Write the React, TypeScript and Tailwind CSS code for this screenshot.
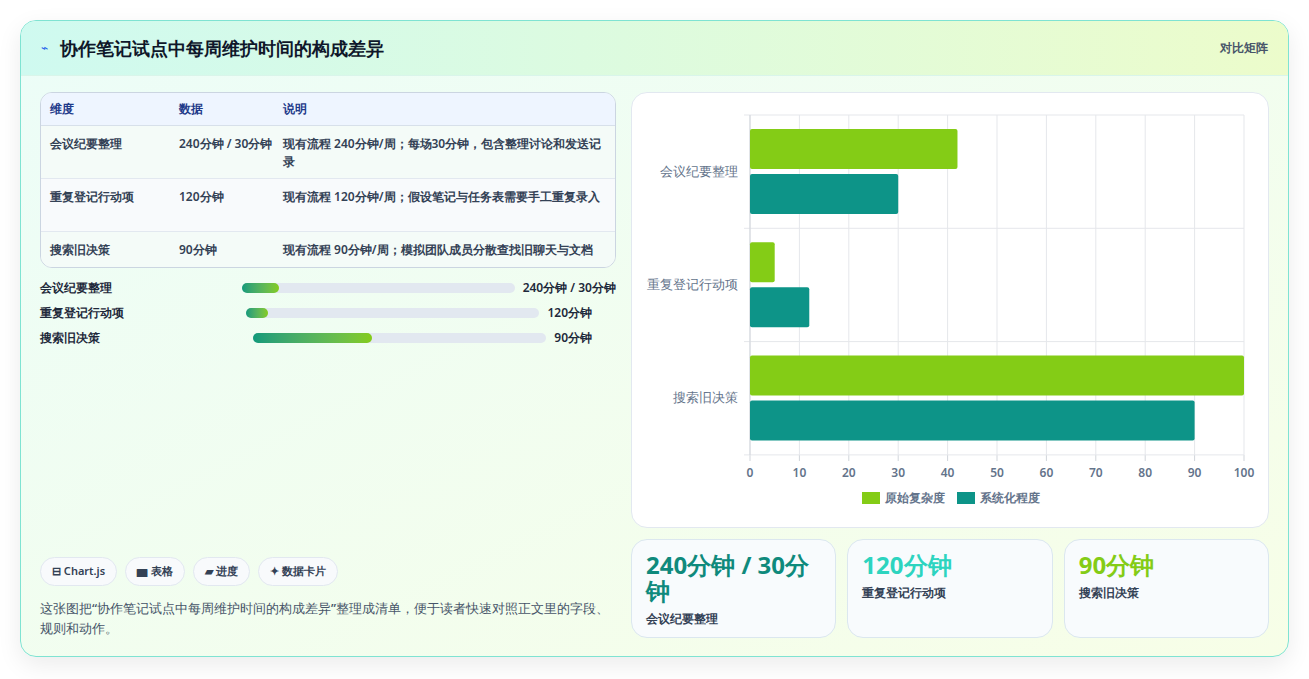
const rows = [
  { k: "会议纪要整理", v: "240分钟 / 30分钟", vt: "240分钟 / 30分钟", d: "现有流程 240分钟/周；每场30分钟，包含整理讨论和发送记录", track: 273, fill: 37 },
  { k: "重复登记行动项", v: "120分钟", vt: "120分钟", d: "现有流程 120分钟/周；假设笔记与任务表需要手工重复录入", track: 293, fill: 22 },
  { k: "搜索旧决策", v: "90分钟", vt: "90分钟", d: "现有流程 90分钟/周；模拟团队成员分散查找旧聊天与文档", track: 293, fill: 119 },
];

const chart = [
  { k: "会议纪要整理", a: 42, b: 30 },
  { k: "重复登记行动项", a: 5, b: 12 },
  { k: "搜索旧决策", a: 100, b: 90 },
];

function Chart() {
  const x0 = 118, w = 494, y0 = 22, bh = 113.3;
  const sx = (v: number) => x0 + (v / 100) * w;
  return (
    <svg width="637" height="435" className="block">
      {[0, 10, 20, 30, 40, 50, 60, 70, 80, 90, 100].map((t) => (
        <g key={t}>
          <line x1={sx(t)} x2={sx(t)} y1={y0} y2={y0 + 340} stroke="#e5e7eb" />
          <line x1={sx(t)} x2={sx(t)} y1={y0 + 340} y2={y0 + 346} stroke="#d1d5db" />
          <text x={sx(t)} y={y0 + 362} textAnchor="middle" fontSize="12" fill="#64748b" fontWeight="600">{t}</text>
        </g>
      ))}
      {[0, 1, 2, 3].map((i) => (
        <line key={i} x1={x0 - 6} x2={x0 + w} y1={y0 + i * bh} y2={y0 + i * bh} stroke="#e5e7eb" />
      ))}
      <line x1={x0} x2={x0} y1={y0} y2={y0 + 340} stroke="#d1d5db" />
      {chart.map((c, i) => {
        const top = y0 + i * bh;
        return (
          <g key={c.k}>
            <text x={x0 - 12} y={top + bh / 2 + 4} textAnchor="end" fontSize="13" fill="#64748b">{c.k}</text>
            <rect x={x0} y={top + 14} width={sx(c.a) - x0} height={40} rx="2" fill="#84cc16" />
            <rect x={x0} y={top + 59} width={sx(c.b) - x0} height={40} rx="2" fill="#0d9488" />
          </g>
        );
      })}
      <rect x="230" y="399" width="18" height="12" fill="#84cc16" />
      <text x="253" y="409" fontSize="12" fill="#64748b" fontWeight="600">原始复杂度</text>
      <rect x="325" y="399" width="18" height="12" fill="#0d9488" />
      <text x="348" y="409" fontSize="12" fill="#64748b" fontWeight="600">系统化程度</text>
    </svg>
  );
}

export default function App() {
  return (
    <div className="w-[1309px] h-[679px] bg-white p-5 pb-0 font-['Noto_Sans_CJK_SC','Noto_Sans',sans-serif]">
      <div className="h-[637px] rounded-2xl border border-[#7fe3d2] overflow-hidden bg-gradient-to-br from-[#ecfdf8] to-[#f7fee7] shadow-[0_8px_24px_rgba(0,0,0,0.08)] flex flex-col">
        <div className="h-[56px] flex items-center justify-between px-5 bg-gradient-to-r from-[#cffaf0] to-[#ecfccb] border-b border-[#d9f5ea]">
          <div className="flex items-center gap-3">
            <span className="text-[#2563eb] text-xs">⌁</span>
            <h1 className="text-[18px] font-bold text-[#0f172a]">协作笔记试点中每周维护时间的构成差异</h1>
          </div>
          <span className="text-[12px] text-[#475569] font-semibold">对比矩阵</span>
        </div>
        <div className="flex-1 flex gap-[15px] px-[19px] pt-4 pb-[18px]">
          <div className="w-[578px] flex flex-col">
            <div className="rounded-xl border border-[#cbd5e1] overflow-hidden bg-[#f8fafc] text-[12px] font-semibold text-[#334155]">
              <div className="flex h-[33px] items-center bg-[#eef5ff] text-[#1e3a8a] border-b border-[#d7e0ea]">
                <div className="w-[138px] pl-[9px]">维度</div>
                <div className="w-[104px]">数据</div>
                <div className="flex-1">说明</div>
              </div>
              {rows.map((r, i) => (
                <div key={r.k} className={`flex pt-[9px] leading-[18px] ${i < 2 ? "h-[53px] border-b border-[#e2e8f0]" : "h-[35px]"} ${i === 1 ? "bg-[#f8fafc]" : "bg-[#f4fbf8]"}`}>
                  <div className="w-[138px] pl-[9px]">{r.k}</div>
                  <div className="w-[104px] pr-2">{r.v}</div>
                  <div className="flex-1 pr-3">{r.d}</div>
                </div>
              ))}
            </div>
            <div className="mt-[12px] flex flex-col gap-[9px] text-[12px] font-semibold text-[#1e293b]">
              {rows.map((r) => (
                <div key={r.k} className="flex items-center h-4">
                  <span className="flex-1">{r.k}</span>
                  <div className="h-[10px] rounded-full bg-[#e2e8f0]" style={{ width: r.track }}>
                    <div className="h-full rounded-full bg-gradient-to-r from-[#0f9a7a] to-[#84cc16]" style={{ width: r.fill }} />
                  </div>
                  <span className="ml-2 w-auto">{r.vt}</span>
                  {r.track === 293 && <span className="w-[24px]" />}
                </div>
              ))}
            </div>
            <div className="mt-auto">
              <div className="flex gap-2 text-[11px] font-semibold text-[#334155]">
                {["⊟ Chart.js", "▆ 表格", "▰ 进度", "✦ 数据卡片"].map((c) => (
                  <span key={c} className="h-[29px] px-[11px] flex items-center rounded-full border border-[#e2e8f0] bg-[#f8fafc]">{c}</span>
                ))}
              </div>
              <p className="mt-[12px] text-[13px] leading-[20px] text-[#475569] font-medium">这张图把“协作笔记试点中每周维护时间的构成差异”整理成清单，便于读者快速对照正文里的字段、规则和动作。</p>
            </div>
          </div>
          <div className="w-[638px] flex flex-col gap-[11px]">
            <div className="h-[436px] rounded-2xl border border-[#e2e8f0] bg-white">
              <Chart />
            </div>
            <div className="flex gap-[11px] h-[99px]">
              {[
                { v: "240分钟 / 30分钟", k: "会议纪要整理", c: "text-[#0f8a7c]" },
                { v: "120分钟", k: "重复登记行动项", c: "text-[#2dd4bf]" },
                { v: "90分钟", k: "搜索旧决策", c: "text-[#84cc16]" },
              ].map((s) => (
                <div key={s.k} className="flex-1 rounded-2xl border border-[#dbe7ef] bg-[#f8fbfd] px-[14px] pt-[12px]">
                  <div className={`text-[24px] leading-[26px] font-bold ${s.c}`}>{s.v}</div>
                  <div className="mt-[6px] text-[12px] text-[#334155] font-semibold">{s.k}</div>
                </div>
              ))}
            </div>
          </div>
        </div>
      </div>
    </div>
  );
}
